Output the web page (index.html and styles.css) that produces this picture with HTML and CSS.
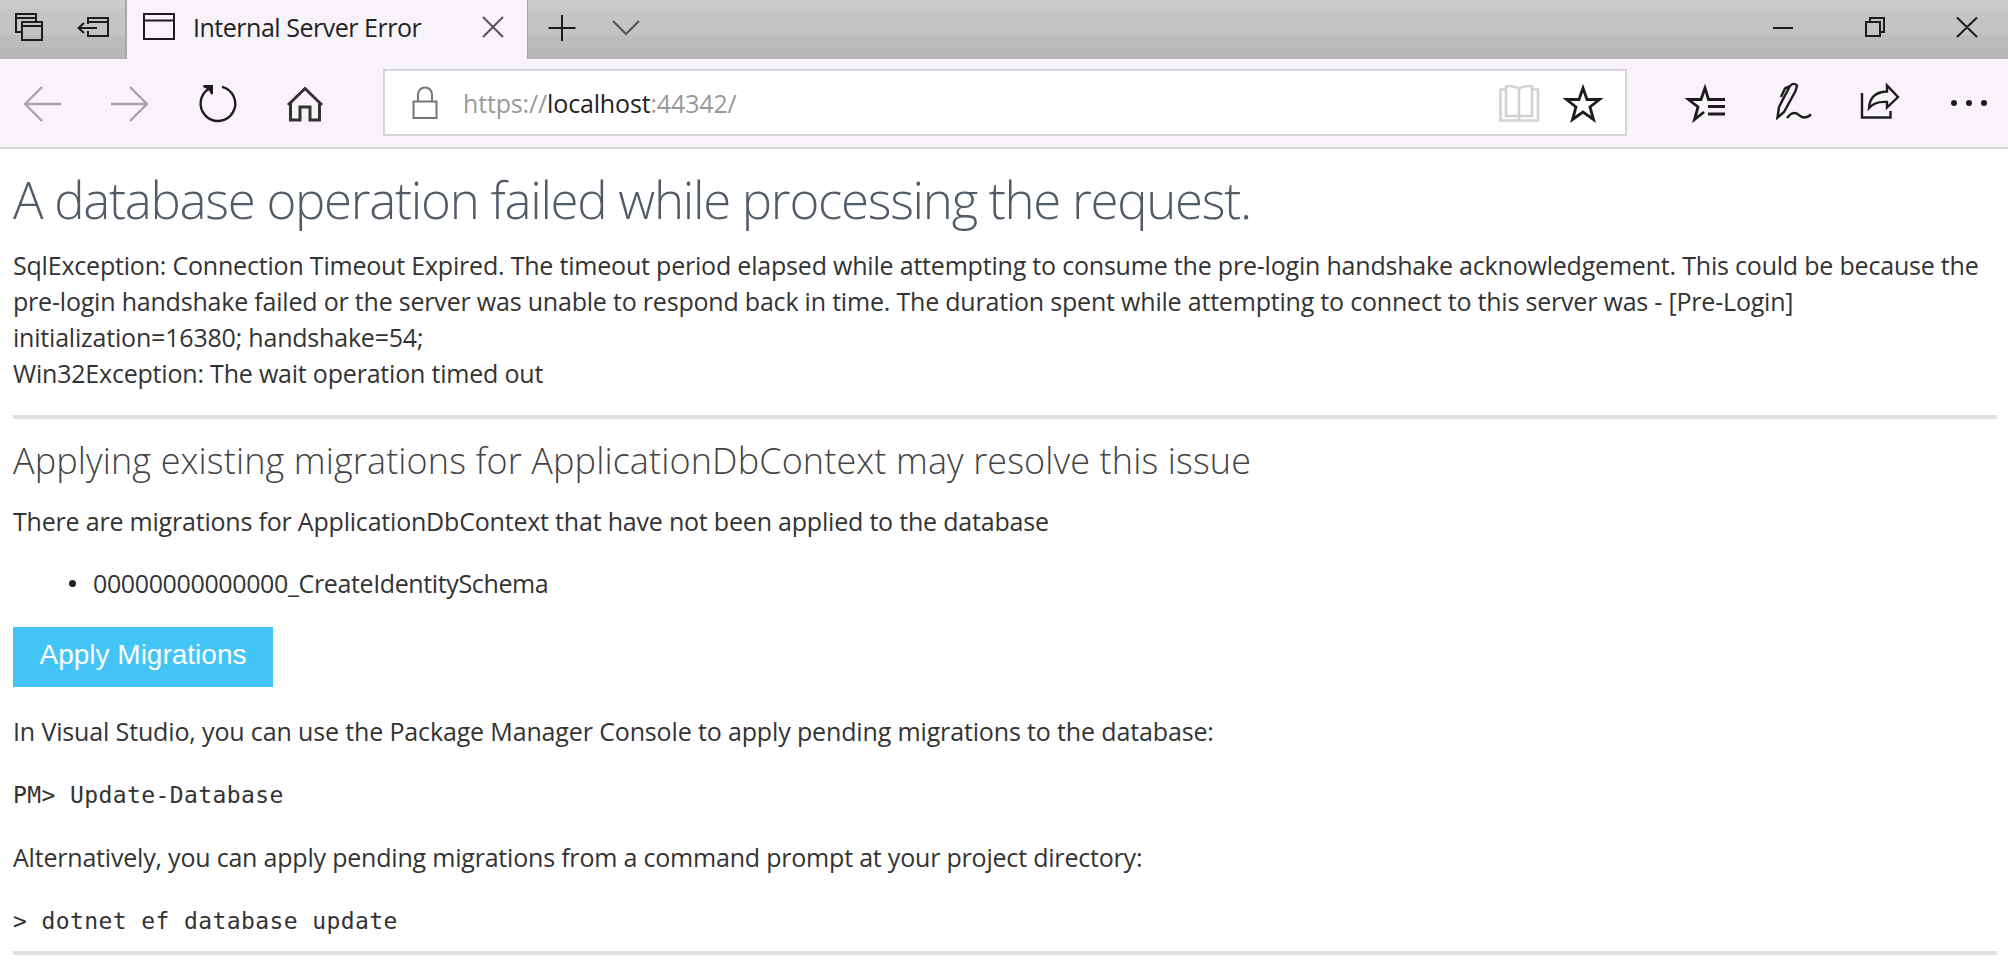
FILE: index.html
```html
<!DOCTYPE html>
<html lang="en">
<head>
<meta charset="utf-8">
<title>Internal Server Error</title>
<link rel="stylesheet" href="styles.css">
</head>
<body>
<header class="titlebar">
  <div class="tab-tools">
    <svg class="icon" width="126" height="59" viewBox="0 0 126 59">
      <path d="M22 32H16V14H36V21M16 18H36M22 22H42V40H22ZM22 26H42"/>
      <path d="M88 24V18H108V36H88V31M88 22H108M78 28H97M84 23L78.500 28L84 33"/>
    </svg>
  </div>
  <div class="tab">
    <svg class="icon" width="34" height="28" viewBox="0 0 34 28"><path d="M2 1H32V26H2ZM2 7.500H32"/></svg>
    <span class="tab-title">Internal Server Error</span>
    <svg class="icon tab-close" width="22" height="22" viewBox="0 0 22 22"><path d="M1 1L21 21M21 1L1 21"/></svg>
  </div>
  <svg class="icon tab-actions" width="130" height="59" viewBox="528 0 130 59">
    <path d="M548.500 28H575.500M562 15V41"/><path class="mid" d="M613 21L626 34L639 21"/>
  </svg>
  <svg class="icon window-controls" width="258" height="59" viewBox="1750 0 258 59">
    <path d="M1773 28H1793M1866 22H1880V36H1866ZM1870 22V18H1884V32H1880M1957 17.500L1977 37M1977 17.500L1957 37"/>
  </svg>
</header>
<nav class="toolbar">
  <svg class="icon nav-icons" width="383" height="87" viewBox="0 59 383 87">
    <path class="dim" d="M25 104H61M42 87L25 104L42 121M111 104H147M130 87L147 104L130 121"/>
    <path class="bold" d="M209.500 88.500A17.300 17.300 0 1 0 222 86.800"/><path class="solid" d="M203.500 86H212V94L209.500 89Z"/>
    <path class="home" d="M288 105L305 88.500L322 105M290.500 103V120H300V107H310V120H319.500V103"/>
  </svg>
  <div class="address">
    <svg class="icon lock" width="26" height="34" viewBox="0 0 26 34"><path d="M1.500 15.500H24.500V32H1.500ZM6 15.500V8.500A7 7 0 0 1 20 8.500V15.500"/></svg>
    <span class="url">https://<b>localhost</b>:44342/</span>
    <svg class="icon address-actions" width="136" height="64" viewBox="1489 71 136 64">
      <path class="faint" d="M1506 89.500H1500.500V120.500H1538V89.500H1532M1519 88.500V120M1519 88.500Q1512 85 1506 86.500V116H1532V86.500Q1526 85 1519 88.500"/>
      <path class="star" d="M1583 88L1587 99.500H1599.500L1590 107L1593.500 119.500L1583 112L1572.500 119.500L1576 107L1566.500 99.500H1579Z"/>
    </svg>
  </div>
  <svg class="icon hub-icons" width="381" height="87" viewBox="1627 59 381 87">
    <path class="star" d="M1725 99.500H1708.500L1705 88L1701 99.500H1688.500L1698 107L1694.500 119.500L1704 112M1708 106.500H1725M1708 114H1725"/>
    <path class="bold" d="M1777.500 117.500L1779 107L1790 86Q1793.500 82 1797 85.500L1795.500 91L1784 112ZM1790 86L1785 88.500L1781 97M1787 118Q1793.500 109.500 1799.500 115.500Q1805 120 1811 114.500"/>
    <path class="bold" d="M1862 93V117.500H1890.500V111M1869 108Q1870 92 1887 91.500V85.500L1898 97L1887 107.500V102Q1875 101 1869 108Z"/>
    <g class="dots"><circle cx="1954" cy="103" r="3"/><circle cx="1969" cy="103" r="3"/><circle cx="1984" cy="103" r="3"/></g>
  </svg>
</nav>
<main class="page">
  <h1>A database operation failed while processing the request.</h1>
  <p class="exception">SqlException: Connection Timeout Expired. The timeout period elapsed while attempting to consume the pre-login handshake acknowledgement. This could be because the<br>pre-login handshake failed or the server was unable to respond back in time. The duration spent while attempting to connect to this server was - [Pre-Login]<br>initialization=16380; handshake=54;<br>Win32Exception: The wait operation timed out</p>
  <hr>
  <h2>Applying existing migrations for ApplicationDbContext may resolve this issue</h2>
  <p class="pending">There are migrations for ApplicationDbContext that have not been applied to the database</p>
  <ul><li>00000000000000_CreateIdentitySchema</li></ul>
  <button class="apply">Apply Migrations</button>
  <p class="vs">In Visual Studio, you can use the Package Manager Console to apply pending migrations to the database:</p>
  <code>PM&gt; Update-Database</code>
  <p class="alt">Alternatively, you can apply pending migrations from a command prompt at your project directory:</p>
  <code>&gt; dotnet ef database update</code>
  <hr class="last">
</main>
</body>
</html>
```

FILE: styles.css
```css
* { box-sizing: border-box; }
body {
  margin: 0;
  width: 2008px;
  height: 967px;
  overflow: hidden;
  background: #fff;
  color: #333;
  font: 25px/36px "Open Sans", "Noto Sans", sans-serif;
}
svg { display: block; flex: none; }
.icon { fill: none; stroke: #1c1c1c; stroke-width: 2; }
.mid { stroke: #555; }
.dim { stroke: #a5a3a5; stroke-width: 2.3; }
.bold { stroke-width: 2.4; }
.home { stroke: #333; stroke-width: 3; }
.star { stroke-width: 2.8; }
.solid { fill: #1c1c1c; }
.faint { stroke: #d2d2d2; stroke-width: 2.6; }
.dots { fill: #1c1c1c; stroke: none; }

.titlebar {
  display: flex;
  height: 59px;
  background: linear-gradient(#cdcbce 0 8px, #c5c5c5 10px 18px, #c5c3c6 24px 34px, #bbbcbb 36px 47px, #b8b6b9 50px);
}
.tab-tools { width: 127px; border-right: 2px solid #a9a7aa; }
.tab {
  display: flex;
  align-items: center;
  width: 401px;
  padding: 0 23px 5px 15px;
  background: #f7f3f8;
  border-right: 1px solid #a3a1a4;
}
.tab-title { margin-left: 17px; color: #222; white-space: nowrap; letter-spacing: -0.48px; }
.tab-close { margin-left: auto; stroke: #555; }
.window-controls { margin-left: auto; }

.toolbar {
  display: flex;
  height: 90px;
  background: #f7f3f8;
  border-bottom: 2px solid #d8d6d9;
}
.address {
  display: flex;
  align-items: center;
  width: 1244px;
  height: 67px;
  margin-top: 10px;
  padding-left: 27px;
  background: #fff;
  border: 2px solid #d5d5d7;
}
.lock { stroke: #777; }
.url { margin-left: 25px; color: #999; letter-spacing: -0.15px; }
.url b { color: #222; font-weight: 400; }
.address-actions { margin-left: auto; }

.page { padding: 0 11px 0 13px; white-space: nowrap; letter-spacing: -0.2px; }
h1, h2, p, ul { margin: 0; font-weight: 400; }
h1 { padding-top: 15px; font-size: 51px; line-height: 70px; font-weight: 300; color: #525c68; letter-spacing: -1.3px; }
.exception { margin-top: 13px; }
hr { height: 4px; margin: 24px 0 0; border: 0; background: #dfdfdf; }
h2 { margin-top: 17px; font-size: 36px; line-height: 50px; font-weight: 300; color: #444; letter-spacing: 0.12px; }
.pending { margin-top: 17px; }
ul { margin-top: 26px; padding-left: 80px; list-style: none; letter-spacing: -0.37px; }
li { display: flex; align-items: center; }
li::before { content: ""; width: 7px; height: 7px; margin: 0 17px 0 -24px; border-radius: 50%; background: #222; }
.apply {
  display: block;
  width: 260px;
  height: 60px;
  margin-top: 26px;
  padding: 0 0 4px;
  border: 0;
  background: #44c5f7;
  color: #fff;
  font: 28px "Liberation Sans", Arial, sans-serif;
}
.vs { margin-top: 26px; letter-spacing: -0.14px; }
code { display: block; margin-top: 28px; font: 23px/36px "DejaVu Sans Mono", monospace; letter-spacing: 0.4px; }
.alt { margin-top: 26px; }
.last { margin-top: 12px; }
```
